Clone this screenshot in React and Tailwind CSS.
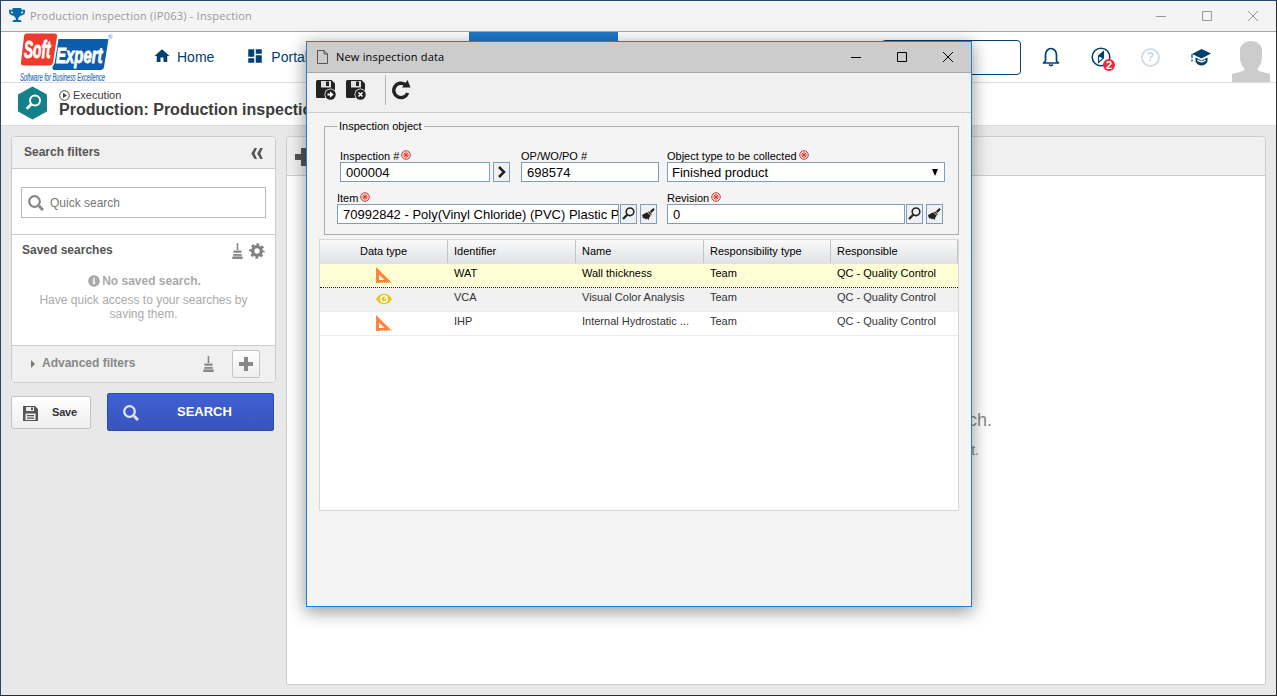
import { FaTrophy, FaInfoCircle } from 'react-icons/fa'
import { MdHome, MdDashboard } from 'react-icons/md'

const rows = [
  { icon: 'ruler', id: 'WAT', name: 'Wall thickness', type: 'Team', resp: 'QC - Quality Control' },
  { icon: 'eye', id: 'VCA', name: 'Visual Color Analysis', type: 'Team', resp: 'QC - Quality Control' },
  { icon: 'ruler', id: 'IHP', name: 'Internal Hydrostatic ...', type: 'Team', resp: 'QC - Quality Control' },
]

const rowStyles = [
  'bg-[#ffffd5] text-black border-b border-dotted border-[#222]',
  'bg-[#f1f1f1] text-[#333] border-b border-[#ececec]',
  'bg-white text-[#333] border-b border-[#ececec]',
]

function Logo() {
  return (
    <svg width="96" height="51" viewBox="0 0 96 51" className="block overflow-visible">
      <path d="M6.500 1.500h28q3 0 2.500 3l-4 26q-.5 3-3.500 3h-26q-3 0-2.500-3l3-26q.3-3 2.500-3z" fill="#ee3a2c" />
      <path d="M38.500 7h50l-4.500 28q-.5 3-3.500 3h-46q-2.500 0-2-3l1-2q1-1 1.300-3z" fill="#0b5cab" />
      <g fontFamily="'Liberation Sans',sans-serif" fontStyle="italic">
        <text transform="translate(4 26) scale(.57 1)" fontSize="24" fontWeight="700" fill="#fff" stroke="#fff" strokeWidth=".9">Soft</text>
        <text transform="translate(36 31) scale(.68 1)" fontSize="22" fontWeight="700" fill="#fff" stroke="#fff" strokeWidth=".9">Expert</text>
        <text x="0" y="49" fontSize="10" fill="#2b6cb5" stroke="#2b6cb5" strokeWidth=".15" textLength="85" lengthAdjust="spacingAndGlyphs">Software for Business Excellence</text>
      </g>
      <text x="88" y="7" fontSize="6" fill="#2b6cb5" fontFamily="Liberation Sans">®</text>
    </svg>
  )
}

function Required() {
  return (
    <svg width="10" height="10" viewBox="0 0 10 10" fill="none" stroke="#e3342a" strokeWidth="1" className="mb-[2px]">
      <circle cx="5" cy="5" r="4.300" />
      <path d="M5 1.500v7M1.500 5h7M2.700 2.700l4.600 4.600M7.300 2.700L2.700 7.300" />
    </svg>
  )
}

// grey broom used in the filters panel
function Broom({ h = 16 }) {
  return (
    <svg width="11" height={h} viewBox="0 0 11 16" fill="#888">
      <path d="M4.700 0h1.600v7H4.700zM1.500 7.500h8v2.200h-8zM1.500 11h8l1.500 5H0z" />
      <path d="M1 13.200h9" stroke="#ddd" strokeWidth=".8" />
    </svg>
  )
}

function Lens({ size = 16, color = '#888' }) {
  return (
    <svg width={size} height={size} viewBox="0 0 16 16" fill="none" stroke={color}>
      <circle cx="6.500" cy="6.500" r="5.300" strokeWidth="2.200" />
      <path d="M11 11l4 4" strokeWidth="3" />
    </svg>
  )
}

function SaveDisk({ type }) {
  return (
    <svg width="21" height="21" viewBox="0 0 21 21">
      <path d="M1.500 0h14L19 3.500V18H1.500Q0 18 0 16.500v-15Q0 0 1.500 0z" fill="#222" />
      <path d="M5 1h10v6.500H5z" fill="#e0e0e0" />
      <path d="M10 1.500h3v4.500h-3z" fill="#222" />
      <circle cx="14.500" cy="14.500" r="6" fill="#f0f0f0" />
      <circle cx="14.500" cy="14.500" r="5.200" fill="#222" />
      {type === 'next'
        ? <path d="M11.500 13.500h2.500v-2.200l3.700 3.200-3.700 3.200v-2.200h-2.500z" fill="#fff" />
        : <path d="M12.500 12.500l4 4M16.500 12.500l-4 4" stroke="#fff" strokeWidth="1.600" />}
    </svg>
  )
}

function TypeIcon({ icon }) {
  if (icon === 'eye') {
    return (
      <svg width="16" height="12" viewBox="0 0 16 12" className="-mt-px">
        <path d="M0 6Q3 .8 8 .8T16 6Q13 11.200 8 11.200T0 6z" fill="#e6c619" />
        <circle cx="8" cy="6" r="3.900" fill="#fff" />
        <circle cx="8" cy="6" r="2.400" fill="#e6c619" />
        <path d="M8 6l1.600-1.400" stroke="#fff" strokeWidth="1.200" />
      </svg>
    )
  }
  return (
    <svg width="16" height="16" viewBox="0 0 16 16" className="-mt-px">
      <path fillRule="evenodd" d="M0 0l16 16h-1.500v-1h-1v1h-1v-1h-1v1h-1.500v-1h-1v1h-1v-1h-1v1h-1.500v-1h-1v1H0zM3 7.500v5.500h5.500z" fill="#ff8439" />
    </svg>
  )
}

function SmallBtn({ children }) {
  return (
    <button className="w-[17px] h-5 shrink-0 border border-[#7f9db9] bg-[#f0f0f0] flex items-center justify-center">
      {children}
    </button>
  )
}

function FieldLens() {
  return (
    <svg width="13" height="13" viewBox="0 0 13 13" fill="none" stroke="#222" className="-mt-px">
      <circle cx="8" cy="4.800" r="3.800" strokeWidth="1.600" />
      <path d="M5.200 7.800L1 12" strokeWidth="2.300" />
    </svg>
  )
}

function FieldBrush() {
  return (
    <svg width="13" height="12" viewBox="0 0 14 13" fill="#222" className="-mt-px">
      <path d="M12.200 0L13.800 1.600 10.300 5.300 8.500 3.500zM7.500 3.500l3.200 3.200-1 1L6.500 4.500zM5.500 4.500l4 4-1.500 1.500-.8 3-2-1.500-1 1-1.500-1.500L1 11 0 7.500z" />
    </svg>
  )
}

function Label({ children, required }) {
  return (
    <div className="h-3 flex items-end gap-[2px] text-[11px] leading-[12px] whitespace-nowrap">
      <span>{children}</span>
      {required && <Required />}
    </div>
  )
}

function WindowControls({ color }) {
  return (
    <div className="ml-auto flex items-center gap-9 mr-[18px]">
      <svg width="10" height="10" viewBox="0 0 10 10"><path d="M0 5.500h10" stroke={color} /></svg>
      <svg width="10" height="10" viewBox="0 0 10 10"><path d="M.5.500h9v9h-9z" fill="none" stroke={color} /></svg>
      <svg width="10" height="10" viewBox="0 0 10 10"><path d="M0 0l10 10M10 0L0 10" stroke={color} /></svg>
    </div>
  )
}

function FiltersPanel() {
  return (
    <aside className="w-[264px] shrink-0">
      <div className="border border-[#ccc] rounded bg-white overflow-hidden h-[247px] w-[265px] flex flex-col">
        <div className="h-8 shrink-0 bg-[#f0f0f0] border-b border-[#ccc] flex items-center justify-between pl-3 pr-[12px]">
          <span className="font-bold text-[#555] -mt-px">Search filters</span>
          <svg width="12" height="11" viewBox="0 0 12 11" fill="#555" className="mt-px">
            <path d="M3.500 0H6L3.500 5.500 6 11H3.500L.3 5.500zM9.300 0h2.500L9.300 5.500l2.500 5.500H9.300L6.100 5.500z" />
          </svg>
        </div>
        <div className="h-[66px] shrink-0 border-b border-[#ccc] pl-[9px] pt-[18px]">
          <div className="w-[245px] h-[31px] border border-[#b9b9b9] flex items-center pl-[6px] gap-[6px] text-[#777]">
            <Lens />
            <span>Quick search</span>
          </div>
        </div>
        <div className="flex-1 pl-[10px] pr-[10px]">
          <div className="h-[31px] flex items-center">
            <span className="font-bold text-[#555] -mt-px">Saved searches</span>
            <span className="ml-auto mr-[6px]"><Broom /></span>
            <svg width="16" height="16" viewBox="0 0 16 16">
              <circle cx="8" cy="8" r="4.300" fill="none" stroke="#808080" strokeWidth="3.200" />
              <circle cx="8" cy="8" r="6.500" fill="none" stroke="#808080" strokeWidth="2.400" strokeDasharray="2.600 2.505" strokeDashoffset="1.300" />
            </svg>
          </div>
          <div className="text-center text-[#aaa] leading-[14px]">
            <p className="font-bold flex items-center justify-center gap-[2px] mt-2 pl-[2px]"><FaInfoCircle size={12} />No saved search.</p>
            <p className="mt-[5px] px-2">Have quick access to your searches by saving them.</p>
          </div>
        </div>
        <div className="h-[37px] shrink-0 bg-[#f0f0f0] border-t border-[#ccc] flex items-center pl-[19px] pr-[15px]">
          <span className="border-y-4 border-y-transparent border-l-4 border-l-[#777]" />
          <span className="ml-[7px] font-bold text-[#888] -mt-[3px]">Advanced filters</span>
          <span className="ml-auto mr-[18px] -mt-px"><Broom h={18} /></span>
          <button className="size-7 border border-[#c4c4c4] rounded-xs bg-gradient-to-b from-white to-[#eee] flex items-center justify-center">
            <svg width="14" height="14" viewBox="0 0 14 14" fill="#888"><path d="M5 0h4v5h5v4H9v5H5V9H0V5h5z" /></svg>
          </button>
        </div>
      </div>
      <div className="flex items-start mt-[10px]">
        <button className="w-20 h-[33px] mt-[3px] border border-[#c4c4c4] rounded-xs bg-gradient-to-b from-white to-[#eee] flex items-center pl-[11px] text-[11px] font-bold text-[#333]">
          <svg width="15" height="15" viewBox="0 0 15 15" className="mt-px">
            <path d="M0 0h12l3 3v12H0z" fill="#555" />
            <path d="M3 1h8v4H3zM2.500 7.500h10V14h-10z" fill="#eee" />
            <path d="M8 1.500h2V4H8zM4 9h7v1.200H4zM4 11.500h7v1.200H4z" fill="#555" />
          </svg>
          <span className="ml-[14px] -mt-px tracking-[-0.2px]">Save</span>
        </button>
        <button className="w-[167px] h-[38px] ml-4 border border-[#2c49b0] rounded-xs bg-gradient-to-b from-[#3f60d5] to-[#3955bb] flex items-center pl-[15px] text-[13px] font-bold text-white">
          <span className="mt-[2px]"><Lens color="#e4e8f6" /></span>
          <span className="ml-[38px] -mt-px">SEARCH</span>
        </button>
      </div>
    </aside>
  )
}

function InspectionDialog() {
  return (
    <div className="absolute left-[305px] top-10 w-[666px] h-[566px] border border-[#1a82d8] bg-[#f4f4f4] text-black shadow-[0_4px_16px_1px_rgba(0,0,0,0.4)] flex flex-col">
      <div className="h-[31px] shrink-0 bg-[#ccc] border-b border-[#a8a8a8] flex items-center pl-[10px] font-['Open_Sans',sans-serif]">
        <svg width="11" height="14" viewBox="0 0 11 14" fill="none" stroke="#555" className="-mt-px"><path d="M.5.500h6.500l3.500 3.500v9.500H.5zM7 .5V4h3.500" /></svg>
        <span className="ml-2 text-[11px] tracking-[0.2px]">New inspection data</span>
        <WindowControls color="#000" />
      </div>
      <div className="h-10 shrink-0 bg-[#f0f0f0] border-b border-[#ccc] flex items-start pl-[9px] pt-[7px]">
        <SaveDisk type="next" />
        <span className="ml-[9px]"><SaveDisk type="close" /></span>
        <span className="w-px h-[30px] bg-[#b5b5b5] ml-[18px] -mt-[5px]" />
        <svg width="20" height="20" viewBox="0 0 20 20" className="ml-[5px]">
          <path d="M14.500 4.800A7.200 7.200 0 1 0 16.700 13" fill="none" stroke="#222" strokeWidth="3.400" />
          <path d="M16.500 0l3 7.500h-8.500z" fill="#222" />
        </svg>
      </div>
      <div className="px-3 pt-[7px]">
        <fieldset className="ml-[5px] w-[635px] h-[115px] border border-[#adadad] text-[13px]">
          <legend className="ml-[12px] px-[2px] text-[11px] leading-[13px]">Inspection object</legend>
          <div className="flex pl-[15px] mt-[17px]">
            <div>
              <Label required>Inspection #</Label>
              <div className="flex gap-[3px]">
                <div className="w-[150px] h-5 border border-[#7f9db9] bg-white px-[5px] leading-[19px]">000004</div>
                <SmallBtn><svg width="8" height="12" viewBox="0 0 8 12"><path d="M1 1l5 5-5 5" fill="none" stroke="#222" strokeWidth="2.500" /></svg></SmallBtn>
              </div>
            </div>
            <div className="ml-[11px]">
              <Label>OP/WO/PO #</Label>
              <div className="w-[138px] h-5 border border-[#7f9db9] bg-white px-[5px] leading-[19px]">698574</div>
            </div>
            <div className="ml-2">
              <Label required>Object type to be collected</Label>
              <div className="w-[278px] h-5 border border-[#7f9db9] bg-white pl-1 pr-[6px] flex items-center justify-between leading-[19px]">
                Finished product
                <svg width="6" height="7" viewBox="0 0 6 7"><path d="M0 0h6L3 7z" /></svg>
              </div>
            </div>
          </div>
          <div className="flex pl-3 mt-[10px]">
            <div>
              <Label required>Item</Label>
              <div className="flex">
                <div className="w-[282px] mr-px h-5 border border-[#7f9db9] bg-white pl-[5px] leading-[19px] overflow-hidden whitespace-nowrap">70992842 - Poly(Vinyl Chloride) (PVC) Plastic P</div>
                <SmallBtn><FieldLens /></SmallBtn>
                <span className="ml-[3px]"><SmallBtn><FieldBrush /></SmallBtn></span>
              </div>
            </div>
            <div className="ml-[10px]">
              <Label required>Revision</Label>
              <div className="flex">
                <div className="w-[238px] h-5 mr-px border border-[#7f9db9] bg-white px-[5px] leading-[19px]">0</div>
                <SmallBtn><FieldLens /></SmallBtn>
                <span className="ml-[3px]"><SmallBtn><FieldBrush /></SmallBtn></span>
              </div>
            </div>
          </div>
        </fieldset>
        <div className="w-[640px] h-[272px] mt-1 border border-[#d8d8d8] bg-white text-[11px]">
          <div className="h-6 grid grid-cols-[128px_128px_128px_127px_127px] bg-gradient-to-b from-[#fafafa] to-[#e0e2e5] border-b border-[#e0e0e0] leading-[23px]">
            <span className="border-r border-[#c4c4c4] text-center">Data type</span>
            <span className="border-r border-[#c4c4c4] pl-[6px]">Identifier</span>
            <span className="border-r border-[#c4c4c4] pl-[6px]">Name</span>
            <span className="border-r border-[#c4c4c4] pl-[6px]">Responsibility type</span>
            <span className="border-r border-[#c4c4c4] pl-[6px]">Responsible</span>
          </div>
          {rows.map((r, i) => (
            <div key={r.id} className={`h-6 grid grid-cols-[128px_128px_128px_127px_127px] leading-[18px] ${rowStyles[i]}`}>
              <span className="flex items-center justify-center"><TypeIcon icon={r.icon} /></span>
              <span className="pl-[6px]">{r.id}</span>
              <span className="pl-[6px]">{r.name}</span>
              <span className="pl-[6px]">{r.type}</span>
              <span className="pl-[6px]">{r.resp}</span>
            </div>
          ))}
        </div>
      </div>
    </div>
  )
}

export default function App() {
  return (
    <div className="relative w-[1277px] h-[696px] overflow-hidden bg-[#e8e8e8] border border-t-[#26476e] border-l-[#26476e] border-r-[#2b2b2b] border-b-[#2b2b2b] flex flex-col font-['Liberation_Sans',Arial,sans-serif] text-xs">
      {/* window title */}
      <div className="h-[31px] shrink-0 bg-[#f4f4f4] border-b border-[#a6a6a6] flex items-center pl-2 font-['Open_Sans',sans-serif] text-[11px] text-[#999]">
        <FaTrophy size={16} color="#0a68a6" className="-mt-[2px]" />
        <span className="ml-[5px] tracking-[0.22px]">Production inspection (IP063) - Inspection</span>
        <WindowControls color="#999" />
      </div>

      {/* main navigation */}
      <header className="h-[51px] shrink-0 bg-white border-b border-[#ddd] flex items-center text-[14px] text-[#004073]">
        <span className="ml-[19px] self-start"><Logo /></span>
        <MdHome size={18} className="ml-[37px] -mt-[2px]" />
        <span className="ml-[6px]">Home</span>
        <MdDashboard size={18} className="ml-[32px] -mt-[2px]" />
        <span className="ml-[7px]">Portal</span>
        <span className="self-start ml-[161px] w-[149px] h-5 bg-[#1e78c8]" />
        <span className="ml-[263px] w-[140px] h-[35px] border border-[#004073] rounded-[4px]" />
        <svg width="18" height="20" viewBox="0 0 18 20" fill="none" stroke="#004073" strokeWidth="1.700" className="ml-[21px]">
          <path d="M3.500 14V8a5.500 6.500 0 0 1 11 0v6l2 2h-15z" strokeLinejoin="round" />
          <path d="M7 17.500q2 2 4 0" />
        </svg>
        <span className="relative ml-[31px]">
          <svg width="20" height="20" viewBox="0 0 20 20" fill="none" stroke="#004073">
            <circle cx="10" cy="10" r="8.800" strokeWidth="1.600" />
            <path d="M12.500 4.500v6.500L7.500 15.500V9z" strokeWidth="1.100" />
            <path d="M12.500 4.500v6.500L7.500 9z" fill="#004073" />
          </svg>
          <span className="absolute left-3 top-3 size-3 rounded-full bg-[#f5283c] text-white text-[11px] font-bold leading-3 text-center">2</span>
        </span>
        <span className="ml-[30px] size-[19px] rounded-full border-2 border-[#d0dde8] text-[#c8d6e4] text-[12px] font-bold leading-[15px] text-center">?</span>
        <svg width="20" height="17" viewBox="0 0 20 17" fill="#004073" className="ml-[31px]">
          <path d="M10.500 0L20 4.500 10.500 9.500 1 5z" />
          <path d="M4.500 8.500l6 3 6-3v4q-2 4-6 4t-6-4z" />
          <path d="M6.500 11q4 3.500 8 0" fill="none" stroke="#fff" strokeWidth="1.600" />
          <path d="M1 5v4M1 10.500v2" stroke="#004073" strokeWidth="1.200" />
        </svg>
        <svg width="38" height="42" viewBox="0 0 38 42" fill="#ccc" className="ml-[21px] self-end">
          <path d="M19 1c6 0 11 4 11 9v7c0 6-2.500 9-4.500 12q0 2 3 2.500l9.500 2.500V42H0v-8l9.500-2.500q3-.5 3-2.500C10.500 26 8 23 8 17v-7c0-5 5-9 11-9z" />
        </svg>
      </header>

      {/* page title */}
      <div className="h-[43px] shrink-0 bg-white border-b border-[#ddd] flex pl-[16px]">
        <svg width="31" height="34" viewBox="0 0 31 34" className="mt-[3px]">
          <path d="M15.500 1.500L29 9v16l-13.500 7.500L2 25V9z" fill="#14808a" stroke="#14808a" strokeWidth="2" strokeLinejoin="round" />
          <circle cx="18" cy="14.500" r="5" fill="none" stroke="#fff" strokeWidth="2" />
          <path d="M14 18.500L10.500 22" stroke="#fff" strokeWidth="2.800" strokeLinecap="round" />
        </svg>
        <div className="ml-[11px] pt-[6px] text-[#3c3c3c] whitespace-nowrap">
          <div className="flex items-center gap-[3px] text-[11px] leading-[13px]">
            <svg width="11" height="11" viewBox="0 0 11 11"><circle cx="5.500" cy="5.500" r="4.800" fill="none" stroke="#444" /><path d="M4 3l4 2.500L4 8z" fill="#444" /></svg>
            Execution
          </div>
          <div className="text-[16px] leading-[18px] font-bold -mt-px">Production: Production inspection</div>
        </div>
      </div>

      <main className="flex-1 flex p-[10px]">
        <FiltersPanel />
        <section className="flex-1 ml-[11px] border border-[#ccc] rounded-t bg-white">
          <div className="h-[39px] bg-[#f0f0f0] border-b border-[#ccc] rounded-t pl-2 pt-[11px]">
            <svg width="18" height="18" viewBox="0 0 18 18" fill="#555"><path d="M6 0h6v6h6v6h-6v6H6v-6H0V6h6z" /></svg>
          </div>
          <div className="pt-[232px] text-right text-[#888] pr-[273px]">
            <p className="text-[18px] leading-6">search.</p>
            <p className="text-[14px] leading-5 mt-2 pr-[13px]">t.</p>
          </div>
        </section>
      </main>

      <InspectionDialog />
    </div>
  )
}
